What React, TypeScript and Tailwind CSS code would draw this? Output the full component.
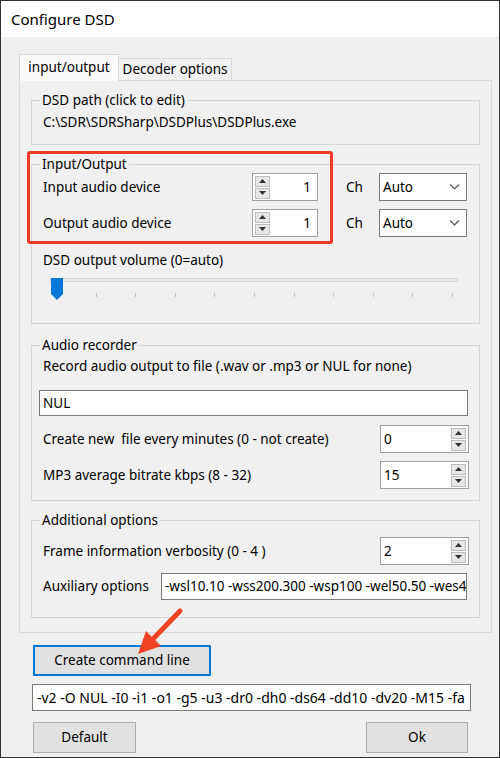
import type { ReactNode } from "react";

function UpDown() {
  return (
    <div className="flex flex-col gap-px">
      <div className="w-[15px] h-[11px] bg-[#e6e6e6] border border-[#bdbdbd] flex items-center justify-center">
        <svg width="7" height="4" viewBox="0 0 7 4">
          <path d="M3.5 0L7 4H0z" fill="#333" />
        </svg>
      </div>
      <div className="w-[15px] h-[11px] bg-[#e6e6e6] border border-[#bdbdbd] flex items-center justify-center">
        <svg width="7" height="4" viewBox="0 0 7 4">
          <path d="M0 0H7L3.5 4z" fill="#333" />
        </svg>
      </div>
    </div>
  );
}

function Spin({ value, left }: { value: string; left?: boolean }) {
  return (
    <div
      className={
        left
          ? "w-[66px] h-[28px] bg-white border border-[#a0a0a0] flex items-center px-[2px]"
          : "w-[89px] h-[28px] bg-white border border-[#a0a0a0] flex flex-row-reverse items-center px-[2px]"
      }
    >
      <UpDown />
      <span className={left ? "flex-1 text-right pr-[4px]" : "flex-1 text-left pl-[1px]"}>{value}</span>
    </div>
  );
}

function Combo() {
  return (
    <div className="w-[88px] h-[28px] bg-white border border-[#7a7a7a] flex items-center justify-between pl-[3px] pr-[6px]">
      <span>Auto</span>
      <svg width="11" height="6" viewBox="0 0 11 6">
        <path d="M1 0.5l4.5 4.5 4.5-4.5" fill="none" stroke="#555" strokeWidth="1.2" />
      </svg>
    </div>
  );
}

function Group({ title, className, children }: { title: string; className: string; children: ReactNode }) {
  return (
    <fieldset className={`border border-[#d5d5d5] ml-[11px] w-[449px] ${className}`}>
      <legend className="ml-[8px] px-[2px] leading-[18px]">{title}</legend>
      {children}
    </fieldset>
  );
}

export default function App() {
  return (
    <div className="relative w-[500px] h-[758px] border border-[#333] flex flex-col text-[13.5px] text-black font-['Noto_Sans',sans-serif] bg-[#f0f0f0]">
      <div className="h-[36px] bg-white flex items-center pl-[10px] text-[15px]">Configure DSD</div>

      <div className="flex-1 bg-[#f0f0f0] pl-[18px] pt-[17px]">
        <div className="flex items-end h-[27px] -mb-px relative z-10">
          <div className="w-[100px] h-[27px] bg-[#fafafa] border border-b-0 border-[#d9d9d9] flex items-center justify-center pb-[1px]">
            input/output
          </div>
          <div className="w-[113px] h-[23px] bg-[#f0f0f0] border border-l-0 border-[#d9d9d9] flex items-center justify-center">
            Decoder options
          </div>
        </div>

        <div className="w-[473px] h-[553px] border border-[#d9d9d9] pt-[10px]">
          <Group title="DSD path (click to edit)" className="h-[54px]">
            <div className="mt-[4px] pl-[11px] leading-[18px]">C:\SDR\SDRSharp\DSDPlus\DSDPlus.exe</div>
          </Group>

          <Group title="Input/Output" className="mt-[10px] h-[169px]">
            <div className="flex items-center pl-[11px]">
              <span className="w-[209px]">Input audio device</span>
              <Spin value="1" left />
              <span className="ml-[28px] w-[33px]">Ch</span>
              <Combo />
            </div>
            <div className="flex items-center pl-[11px] mt-[8px]">
              <span className="w-[209px]">Output audio device</span>
              <Spin value="1" left />
              <span className="ml-[28px] w-[33px]">Ch</span>
              <Combo />
            </div>
            <div className="mt-[14px] pl-[11px] leading-[18px]">DSD output volume (0=auto)</div>
            <div className="relative ml-[18px] w-[408px] h-[30px] mt-[5px]">
              <div className="mt-[9px] h-[4px] bg-[#e7e7e7] border border-[#d6d6d6]" />
              <div className="mt-[11px] flex justify-between pl-[6px] pr-[5px]">
                {Array.from({ length: 11 }).map((_, i) => (
                  <div key={i} className="w-px h-[4px] bg-[#c4c4c4]" />
                ))}
              </div>
              <svg className="absolute left-[1px] top-0" width="12" height="22" viewBox="0 0 12 22">
                <path d="M0 0H12V16L6 22L0 16Z" fill="#0078d7" />
              </svg>
            </div>
          </Group>

          <Group title="Audio recorder" className="mt-[12px] h-[165px]">
            <div className="mt-[3px] pl-[11px] leading-[18px]">
              Record audio output to file (.wav or .mp3 or NUL for none)
            </div>
            <div className="mt-[15px] ml-[7px] w-[429px] h-[26px] bg-white border border-[#7a7a7a] flex items-center pl-[3px]">
              NUL
            </div>
            <div className="flex items-center justify-between pl-[11px] pr-[10px] mt-[9px]">
              <span>Create new&nbsp; file every minutes (0 - not create)</span>
              <Spin value="0" />
            </div>
            <div className="flex items-center justify-between pl-[11px] pr-[10px] mt-[8px]">
              <span>MP3 average bitrate kbps (8 - 32)</span>
              <Spin value="15" />
            </div>
          </Group>

          <Group title="Additional options" className="mt-[10px] h-[107px]">
            <div className="flex items-center justify-between pl-[11px] pr-[10px] mt-[8px]">
              <span>Frame information verbosity (0 - 4 )</span>
              <Spin value="2" />
            </div>
            <div className="flex items-center pl-[11px] mt-[8px]">
              <span className="w-[118px]">Auxiliary options</span>
              <div className="w-[306px] h-[27px] bg-white border border-[#7a7a7a] flex items-center pl-[3px] overflow-hidden whitespace-nowrap">
                -wsl10.10 -wss200.300 -wsp100 -wel50.50 -wes4
              </div>
            </div>
          </Group>
        </div>

        <button className="mt-[12px] ml-[14px] w-[178px] h-[31px] bg-[#e1e1e1] border-2 border-[#0078d7] flex items-center justify-center">
          Create command line
        </button>
        <div className="mt-[8px] ml-[13px] w-[439px] h-[27px] bg-white border border-[#7a7a7a] flex items-center pl-[4px] overflow-hidden whitespace-nowrap text-[14px]">
          -v2 -O NUL -I0 -i1 -o1 -g5 -u3 -dr0 -dh0 -ds64 -dd10 -dv20 -M15 -fa
        </div>
        <div className="mt-[11px] ml-[14px] w-[435px] flex justify-between">
          <button className="w-[103px] h-[31px] bg-[#e1e1e1] border border-[#adadad]">Default</button>
          <button className="w-[102px] h-[31px] bg-[#e1e1e1] border border-[#adadad]">Ok</button>
        </div>
      </div>

      <div className="absolute left-[26px] top-[150px] w-[306px] h-[93px] border-[3px] border-[#ee3a22] rounded-[3px]" />
      <svg className="absolute left-[127px] top-[599px]" width="64" height="64" viewBox="128 600 64 64">
        <path d="M180 611L151 641" stroke="#f04424" strokeWidth="5" strokeLinecap="round" />
        <path d="M138 654L146 631L161 646Z" fill="#f04424" />
      </svg>
    </div>
  );
}
